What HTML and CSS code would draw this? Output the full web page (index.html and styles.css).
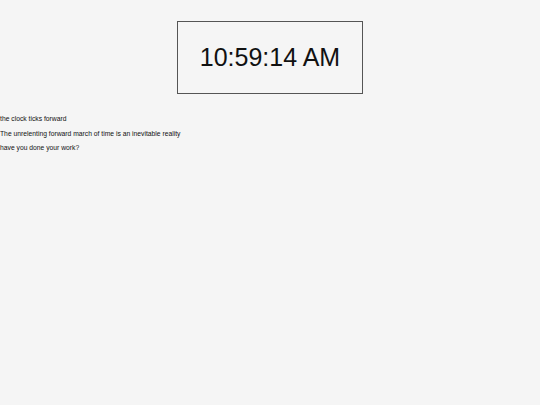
FILE: index.html
```html
<!DOCTYPE html>
<html>
<head>
<meta charset="utf-8">
<link rel="stylesheet" href="styles.css">
</head>
<body>
<div class="clock-wrap">
  <div class="clock">10:59:14 AM</div>
</div>
<div class="notes">
  <p>the clock ticks forward</p>
  <p>The unrelenting forward march of time is an inevitable reality</p>
  <p>have you done your work?</p>
</div>
</body>
</html>
```
FILE: styles.css
```css
html, body {
  margin: 0;
  padding: 0;
  background: #f5f5f5;
}
body {
  font-family: "Liberation Sans", Arial, sans-serif;
  color: #111;
}
.clock-wrap {
  display: flex;
  justify-content: center;
  padding-top: 21px;
}
.clock {
  border: 1px solid #555;
  padding: 21px 22px;
  font-size: 25px;
  line-height: 29px;
}
.notes {
  padding-top: 21px;
}
.notes p {
  margin: 0 0 6.75px 0;
  font-size: 6.75px;
  line-height: 7.75px;
}
```
